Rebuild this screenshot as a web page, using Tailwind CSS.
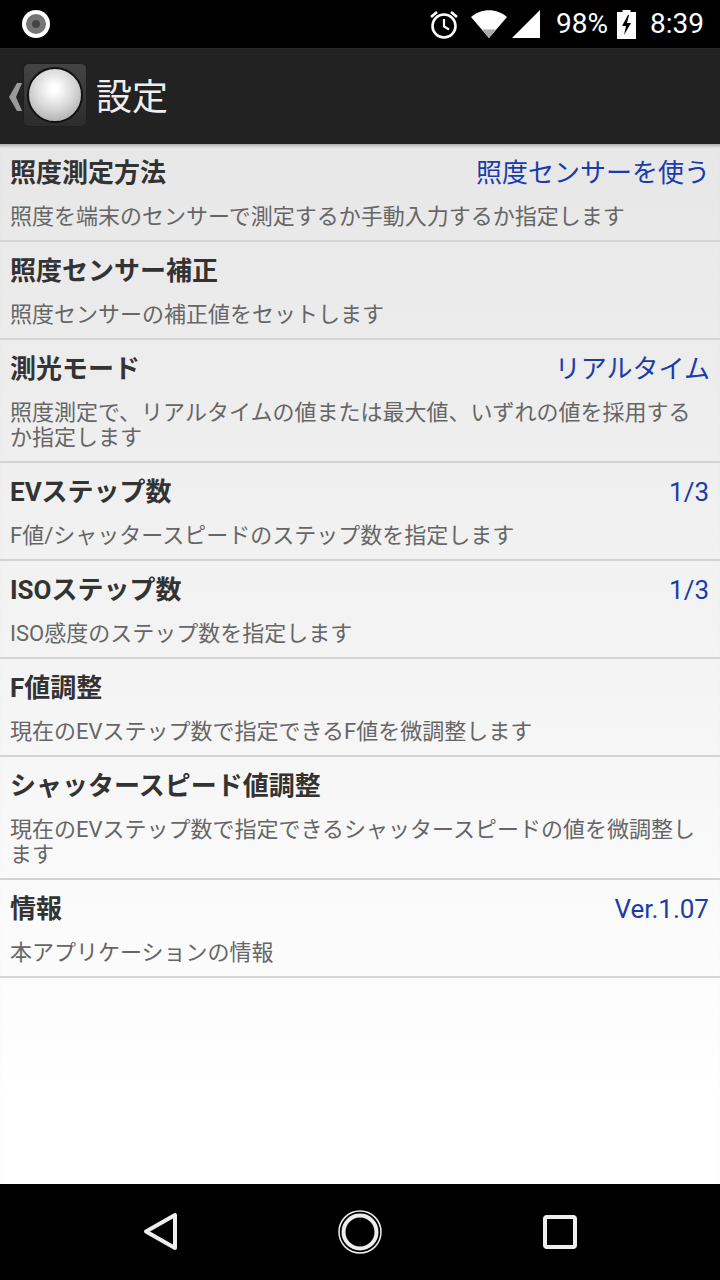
<!DOCTYPE html>
<html lang="ja"><head><meta charset="utf-8">
<script src="https://cdn.jsdelivr.net/npm/@tailwindcss/browser@4"></script></head>
<body class="m-0">
<div class="w-[720px] h-[1280px] flex flex-col overflow-hidden font-['Roboto','Noto_Sans_CJK_JP',sans-serif]">
  <div class="h-12 bg-black flex items-center shrink-0 text-white">
    <div class="ml-[22px] w-7 h-7 rounded-full bg-white flex items-center justify-center"><div class="w-5 h-5 rounded-full bg-[#757575] flex items-center justify-center"><div class="w-2 h-2 rounded-full bg-[#444]"></div></div></div>
    <div class="ml-auto flex items-center">
      <svg width="32" height="32" viewBox="0 0 32 32" class="mr-[11px]" fill="none" stroke="white" stroke-width="2.6"><circle cx="16" cy="18" r="11.500"/><path d="M16 11v7.500l5 3" stroke-width="2.200"/><path d="M3 9l6-5M29 9l-6-5"/></svg>
      <svg width="36" height="28" viewBox="0 0 36 28" class="mr-[5px]"><path d="M18 28L0 7C10-2 26-2 36 7z" fill="white"/><path d="M18 28L11 19.500H25z" fill="#aaa"/></svg>
      <svg width="28" height="28" viewBox="0 0 28 28" class="mr-[16px]"><path d="M0 28L28 0V28z" fill="white"/></svg>
      <span class="text-[28px] leading-8 mr-[9px]">98%</span>
      <svg width="19" height="29" viewBox="0 0 19 29" class="mr-[14px]"><path d="M5.500 0h8v2H19V29H0V2h5.500z" fill="white"/><path d="M11 5L5 16h4l-2 9 7-12h-4l2-8z" fill="black"/></svg>
      <span class="text-[28px] leading-8 mr-[16px]">8:39</span>
    </div>
  </div>
  <div class="h-24 bg-[#222] flex items-center shrink-0 border-t border-[#2b2b2b]">
    <svg width="14" height="28" viewBox="0 0 14 28" class="ml-2 mr-[2px]"><path d="M14 0H9L1 14l8 14h5L8 14z" fill="#9a9a9a"/></svg>
    <div class="w-[62px] h-[62px] mb-[3px] rounded-[5px] bg-[linear-gradient(#444,#2c2c2c)] flex items-center justify-center shadow-[0_0_1px_#111]">
      <div class="w-14 h-14 rounded-full border-2 border-[#111] bg-[radial-gradient(circle_at_48%_38%,#fff_8%,#d8d8d8_48%,#969696_100%)]"></div>
    </div>
    <span class="ml-[10px] mt-[2px] text-[36px] leading-none text-[#eee]">設定</span>
  </div>
  <div class="flex-1 bg-[linear-gradient(#e7e7e7,#ffffff_92%)] shadow-[inset_0_4px_3px_-2px_rgba(0,0,0,0.25)]">
    <div class="h-[98px] border-b-2 border-[#d4d4d4] pl-[10px] pr-[11px] pt-[13px]">
      <div class="flex justify-between h-8 items-center"><span class="text-[26px] font-bold text-[#333]">照度測定方法</span><span class="text-[26px] -mr-px text-[#1a3caa]">照度センサーを使う</span></div>
      <p class="mt-[15px] text-[22px] leading-[25px] text-[#666]">照度を端末のセンサーで測定するか手動入力するか指定します</p>
    </div>
    <div class="h-[98px] border-b-2 border-[#d4d4d4] pl-[10px] pr-[11px] pt-[13px]">
      <div class="flex justify-between h-8 items-center"><span class="text-[26px] font-bold text-[#333]">照度センサー補正</span></div>
      <p class="mt-[15px] text-[22px] leading-[25px] text-[#666]">照度センサーの補正値をセットします</p>
    </div>
    <div class="h-[123px] border-b-2 border-[#d4d4d4] pl-[10px] pr-[11px] pt-[13px]">
      <div class="flex justify-between h-8 items-center"><span class="text-[26px] font-bold text-[#333]">測光モード</span><span class="text-[26px] -mr-px text-[#1a3caa]">リアルタイム</span></div>
      <p class="mt-[15px] text-[22px] leading-[25px] text-[#666]">照度測定で、リアルタイムの値または最大値、いずれの値を採用するか指定します</p>
    </div>
    <div class="h-[98px] border-b-2 border-[#d4d4d4] pl-[10px] pr-[11px] pt-[13px]">
      <div class="flex justify-between h-8 items-center"><span class="text-[26px] font-bold text-[#333]">EVステップ数</span><span class="text-[26px] text-[#1a3caa]">1/3</span></div>
      <p class="mt-[15px] text-[22px] leading-[25px] text-[#666]">F値/シャッタースピードのステップ数を指定します</p>
    </div>
    <div class="h-[98px] border-b-2 border-[#d4d4d4] pl-[10px] pr-[11px] pt-[13px]">
      <div class="flex justify-between h-8 items-center"><span class="text-[26px] font-bold text-[#333]">ISOステップ数</span><span class="text-[26px] text-[#1a3caa]">1/3</span></div>
      <p class="mt-[15px] text-[22px] leading-[25px] text-[#666]">ISO感度のステップ数を指定します</p>
    </div>
    <div class="h-[98px] border-b-2 border-[#d4d4d4] pl-[10px] pr-[11px] pt-[13px]">
      <div class="flex justify-between h-8 items-center"><span class="text-[26px] font-bold text-[#333]">F値調整</span></div>
      <p class="mt-[15px] text-[22px] leading-[25px] text-[#666]">現在のEVステップ数で指定できるF値を微調整します</p>
    </div>
    <div class="h-[123px] border-b-2 border-[#d4d4d4] pl-[10px] pr-[11px] pt-[13px]">
      <div class="flex justify-between h-8 items-center"><span class="text-[26px] font-bold text-[#333]">シャッタースピード値調整</span></div>
      <p class="mt-[15px] text-[22px] leading-[25px] text-[#666]">現在のEVステップ数で指定できるシャッタースピードの値を微調整します</p>
    </div>
    <div class="h-[98px] border-b-2 border-[#d4d4d4] pl-[10px] pr-[11px] pt-[13px]">
      <div class="flex justify-between h-8 items-center"><span class="text-[26px] font-bold text-[#333]">情報</span><span class="text-[26px] text-[#1a3caa]">Ver.1.07</span></div>
      <p class="mt-[15px] text-[22px] leading-[25px] text-[#666]">本アプリケーションの情報</p>
    </div>
  </div>
  <div class="h-24 bg-black shrink-0 flex items-center justify-between pl-[142px] pr-[142px]">
    <svg width="38" height="40" viewBox="0 0 38 40" fill="none" stroke="#eee" stroke-width="4" stroke-linejoin="round"><path d="M33 3V36L4 19.500z"/></svg>
    <svg width="44" height="44" viewBox="0 0 44 44" class="-translate-x-px" fill="none"><circle cx="22" cy="22" r="21" stroke="#eee" stroke-width="1.500"/><circle cx="22" cy="22" r="16.500" stroke="#eee" stroke-width="4"/></svg>
    <svg width="36" height="36" viewBox="0 0 36 36" fill="none"><rect x="3" y="3" width="30" height="30" rx="2" stroke="#eee" stroke-width="4"/></svg>
  </div>
</div>
</body></html>
